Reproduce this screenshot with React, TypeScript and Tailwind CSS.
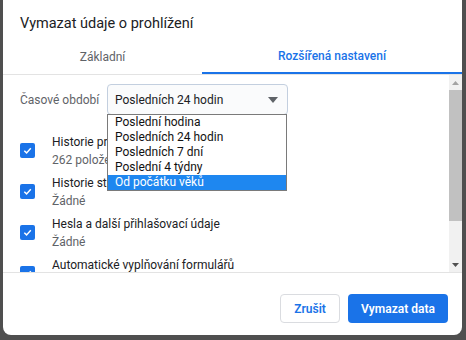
const items = [
  { title: 'Historie prohlížení', sub: '262 položek' },
  { title: 'Historie stahování', sub: 'Žádné' },
  { title: 'Hesla a další přihlašovací údaje', sub: 'Žádné' },
  { title: 'Automatické vyplňování formulářů', sub: 'Žádné' },
]

const options = ['Poslední hodina', 'Posledních 24 hodin', 'Posledních 7 dní', 'Poslední 4 týdny', 'Od počátku věků']

function Check() {
  return (
    <div className="w-[15px] h-[15px] rounded-[2px] bg-[#1a73e8] flex items-center justify-center shrink-0 -mt-[2px]">
      <svg width="11" height="11" viewBox="0 0 12 12">
        <path d="M2.5 6.2 L5 8.6 L9.6 3.6" fill="none" stroke="white" strokeWidth="1.6" />
      </svg>
    </div>
  )
}

export default function App() {
  return (
    <div className="w-[466px] h-[340px] bg-[#4f4f4f] pl-[3px] pr-[4px] pb-[5px] overflow-hidden font-['Roboto',sans-serif]">
      <div className="bg-white h-full rounded-b-[8px] flex flex-col overflow-hidden">

        {/* Title */}
        <div className="pt-[13px] px-[17px] text-[14.5px] leading-[22px] text-[#202124]">
          Vymazat údaje o prohlížení
        </div>

        {/* Tabs */}
        <div className="flex mt-[5px] border-b border-[#e3e3e3] text-[12px]">
          <div className="w-[199px] h-[34px] flex items-center justify-center text-[#5f6368]">Základní</div>
          <div className="flex-1 h-[34px] flex items-center justify-center text-[#1a73e8] font-medium border-b-2 border-[#1a73e8] -mb-px">
            Rozšířená nastavení
          </div>
        </div>

        {/* Content */}
        <div className="flex-1 flex min-h-0 border-b border-[#e3e3e3]">
          <div className="flex-1 pl-[17px] pt-[9px] overflow-hidden">
            <div className="flex items-center">
              <span className="text-[12px] text-[#5f6368] w-[87px]">Časové období</span>
              <div className="relative">
                <div className="w-[181px] h-[31px] border border-[#c3cfdf] rounded-[4px] bg-[#fafbfc] flex items-center justify-between pl-[7px] pr-[9px] text-[12px] text-[#202124]">
                  Posledních 24 hodin
                  <svg width="10" height="6" viewBox="0 0 10 6"><path d="M0 0 L10 0 L5 6 Z" fill="#5f6368" /></svg>
                </div>
                <div className="absolute z-10 left-0 top-[30px] w-[180px] bg-white border border-[#7a7a7a] text-[12px] leading-[15px] text-[#111]">
                  {options.map((o, i) => (
                    <div key={o} className={i === 4 ? 'pl-[7px] bg-[#1e87f0] text-white' : 'pl-[7px]'}>{o}</div>
                  ))}
                </div>
              </div>
            </div>

            <div className="mt-[18px] flex flex-col gap-[5px]">
              {items.map((it) => (
                <div key={it.title} className="flex items-center gap-[17px]">
                  <Check />
                  <div className="text-[12px] leading-[18px]">
                    <div className="text-[#202124]">{it.title}</div>
                    <div className="text-[#5f6368]">{it.sub}</div>
                  </div>
                </div>
              ))}
            </div>
          </div>

          {/* Scrollbar */}
          <div className="w-[13px] bg-[#f1f1f1] flex flex-col items-center">
            <div className="h-[15px] flex items-center justify-center">
              <svg width="7" height="4" viewBox="0 0 7 4"><path d="M0 4 L7 4 L3.5 0 Z" fill="#a3a3a3" /></svg>
            </div>
            <div className="w-full h-[131px] bg-[#c1c1c1]" />
            <div className="flex-1" />
            <div className="h-[15px] flex items-center justify-center">
              <svg width="7" height="4" viewBox="0 0 7 4"><path d="M0 0 L7 0 L3.5 4 Z" fill="#505050" /></svg>
            </div>
          </div>
        </div>

        {/* Footer */}
        <div className="flex justify-end gap-[8px] pt-[21px] pb-[12px] pr-[14px]">
          <button className="w-[60px] h-[29px] border border-[#dadce0] rounded-[4px] text-[12px] font-semibold text-[#1a73e8]">Zrušit</button>
          <button className="w-[100px] h-[29px] rounded-[4px] bg-[#1a73e8] text-[12px] font-semibold text-white">Vymazat data</button>
        </div>
      </div>
    </div>
  )
}
